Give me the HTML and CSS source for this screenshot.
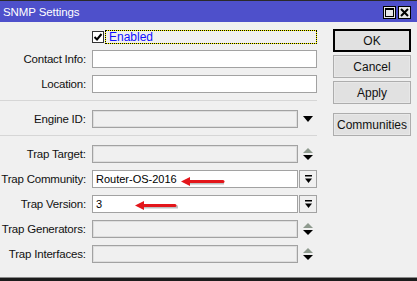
FILE: index.html
```html
<!DOCTYPE html>
<html lang="en">
<head>
    <meta charset="UTF-8">
    <title>SNMP Settings</title>
    <link rel="stylesheet" href="styles.css">
</head>
<body>
    <div class="window">
        <!-- Title bar -->
        <div class="titlebar">
            <span class="title">SNMP Settings</span>
            <div class="win-btns">
                <span class="win-btn">
                    <svg width="11" height="11" viewBox="0 0 11 11"><rect x="1.5" y="1.5" width="8" height="8" fill="none" stroke="#000" stroke-width="1"/><rect x="1" y="1" width="9" height="2" fill="#000"/></svg>
                </span>
                <span class="win-btn">
                    <svg width="11" height="11" viewBox="0 0 11 11"><path d="M2 2 L9 9 M9 2 L2 9" stroke="#000" stroke-width="2"/></svg>
                </span>
            </div>
        </div>

        <div class="content">
            <!-- Form fields -->
            <div class="form">
                <div class="row row-check">
                    <span class="label"></span>
                    <span class="checkbox">
                        <svg width="10" height="10" viewBox="0 0 10 10"><path d="M1.5 5 L4 7.5 L8.5 2" fill="none" stroke="#000" stroke-width="2"/></svg>
                    </span>
                    <span class="focus">Enabled</span>
                </div>

                <div class="row">
                    <span class="label">Contact Info:</span>
                    <span class="field edit full"></span>
                </div>
                <div class="row">
                    <span class="label">Location:</span>
                    <span class="field edit full"></span>
                </div>

                <div class="separator"></div>

                <div class="row">
                    <span class="label">Engine ID:</span>
                    <span class="field short"></span>
                    <span class="icon">
                        <svg width="10" height="6" viewBox="0 0 10 6"><path d="M0 0 H10 L5 6 Z" fill="#000"/></svg>
                    </span>
                </div>

                <div class="separator"></div>

                <div class="row">
                    <span class="label">Trap Target:</span>
                    <span class="field short"></span>
                    <span class="icon">
                        <svg width="10" height="12" viewBox="0 0 10 12"><path d="M5 0 L10 5 H0 Z" fill="#8e9a8e"/><path d="M0 7 H10 L5 12 Z" fill="#000"/></svg>
                    </span>
                </div>
                <div class="row">
                    <span class="label">Trap Community:</span>
                    <span class="field edit combo">Router-OS-2016</span>
                    <span class="drop-btn">
                        <svg width="9" height="9" viewBox="0 0 9 9"><rect x="1" y="0" width="7" height="1.5" fill="#000"/><path d="M1 3.5 H8 L4.5 8 Z" fill="#000"/></svg>
                    </span>
                </div>
                <div class="row">
                    <span class="label">Trap Version:</span>
                    <span class="field edit combo">3</span>
                    <span class="drop-btn">
                        <svg width="9" height="9" viewBox="0 0 9 9"><rect x="1" y="0" width="7" height="1.5" fill="#000"/><path d="M1 3.5 H8 L4.5 8 Z" fill="#000"/></svg>
                    </span>
                </div>
                <div class="row">
                    <span class="label">Trap Generators:</span>
                    <span class="field short"></span>
                    <span class="icon">
                        <svg width="10" height="12" viewBox="0 0 10 12"><path d="M5 0 L10 5 H0 Z" fill="#8e9a8e"/><path d="M0 7 H10 L5 12 Z" fill="#000"/></svg>
                    </span>
                </div>
                <div class="row">
                    <span class="label">Trap Interfaces:</span>
                    <span class="field short"></span>
                    <span class="icon">
                        <svg width="10" height="12" viewBox="0 0 10 12"><path d="M5 0 L10 5 H0 Z" fill="#8e9a8e"/><path d="M0 7 H10 L5 12 Z" fill="#000"/></svg>
                    </span>
                </div>
            </div>

            <!-- Dialog buttons -->
            <div class="buttons">
                <button class="btn default">OK</button>
                <button class="btn">Cancel</button>
                <button class="btn">Apply</button>
                <button class="btn gap">Communities</button>
            </div>
        </div>

        <!-- Red annotation arrows -->
        <svg class="annot annot-community" width="48" height="12" viewBox="0 0 48 12">
            <path d="M9 7 H44" stroke="rgba(0,0,0,0.25)" stroke-width="3"/>
            <path d="M8 5.5 H43" stroke="#e3161b" stroke-width="3" stroke-linecap="round"/>
            <path d="M1 5.5 L10 1 L10 10 Z" fill="#e3161b"/>
        </svg>
        <svg class="annot annot-version" width="48" height="12" viewBox="0 0 48 12">
            <path d="M9 7 H44" stroke="rgba(0,0,0,0.25)" stroke-width="3"/>
            <path d="M8 5.5 H41" stroke="#e3161b" stroke-width="3" stroke-linecap="round"/>
            <path d="M1 5.5 L10 1 L10 10 Z" fill="#e3161b"/>
        </svg>
    </div>
</body>
</html>
```

FILE: styles.css
```css
body {
    margin: 0;
    background: #1c1c1c;
    font-family: 'Liberation Sans', Arial, sans-serif;
    font-size: 11px;
    color: #111;
}

.window {
    position: relative;
    width: 417px;
    height: 278px;
    background: #f0f0f0;
    border-top: 1px solid #2a2a2a;
    border-bottom: 1px solid #8a8a8a;
    box-sizing: border-box;
}

.titlebar {
    height: 21px;
    background: #4e50cb;
    display: flex;
    align-items: center;
    justify-content: space-between;
    padding: 0 6px 0 3px;
}

.title {
    color: #fff;
    font-size: 11.5px;
    letter-spacing: -0.1px;
    margin-top: 1px;
}

.win-btns {
    display: flex;
    gap: 2px;
    margin-top: 2px;
}

.win-btn {
    width: 13px;
    height: 13px;
    box-sizing: border-box;
    border: 1px solid #000;
    background: #e6e6e6;
    display: flex;
    align-items: center;
    justify-content: center;
}

.content {
    display: flex;
    gap: 16px;
}

.form {
    width: 317px;
    padding-top: 8px;
}

.row {
    display: flex;
    align-items: center;
    height: 18px;
    margin-bottom: 7px;
}

.row-check {
    height: 14px;
    margin-bottom: 6px;
}

.label {
    width: 86px;
    margin-right: 6px;
    text-align: right;
    line-height: 18px;
    font-size: 11.5px;
    letter-spacing: -0.2px;
    white-space: nowrap;
}

.checkbox {
    width: 12px;
    height: 12px;
    box-sizing: border-box;
    border: 1px solid #333;
    background: #fff;
    display: flex;
    align-items: center;
    justify-content: center;
}

.focus {
    flex: 1;
    height: 14px;
    margin-left: 1px;
    padding-left: 3px;
    box-sizing: border-box;
    border: 1px dotted #000;
    background: linear-gradient(#f0f0f0, #f0f0f0) padding-box, #ffff00 border-box;
    color: #1010ff;
    font-size: 12px;
    line-height: 12px;
}

.field {
    height: 18px;
    box-sizing: border-box;
    border: 1px solid #a2a2a2;
    box-shadow: inset 0 0 0 1px #dedede;
    background: #f0f0f0;
    padding-left: 3px;
    line-height: 16px;
    color: #000;
}

.field.edit {
    background: #fff;
    box-shadow: none;
}

.field.full {
    width: 225px;
}

.field.short {
    width: 207px;
}

.field.combo {
    width: 206px;
}

.icon {
    width: 18px;
    display: flex;
    justify-content: center;
    padding-left: 1px;
}

.drop-btn {
    width: 18px;
    height: 18px;
    margin-left: 1px;
    box-sizing: border-box;
    border: 1px solid #a2a2a2;
    background: #f0f0f0;
    display: flex;
    align-items: center;
    justify-content: center;
}

.separator {
    margin: 1px 0 9px;
    border-top: 1px solid #d6d6d6;
    height: 0;
}

.buttons {
    width: 78px;
    padding-top: 7px;
    display: flex;
    flex-direction: column;
    gap: 3px;
}

.btn {
    height: 23px;
    border: 1px solid #adadad;
    box-shadow: inset 0 0 0 1px #e8e8e8;
    background: #e1e1e1;
    font-family: 'Liberation Sans', Arial, sans-serif;
    font-size: 12px;
    color: #111;
    padding: 0;
}

.btn.default {
    border: 2px solid #000;
    box-shadow: none;
}

.btn.gap {
    margin-top: 6px;
}

.annot {
    position: absolute;
}

.annot-community {
    left: 180px;
    top: 175px;
}

.annot-version {
    left: 134px;
    top: 199px;
}
```
